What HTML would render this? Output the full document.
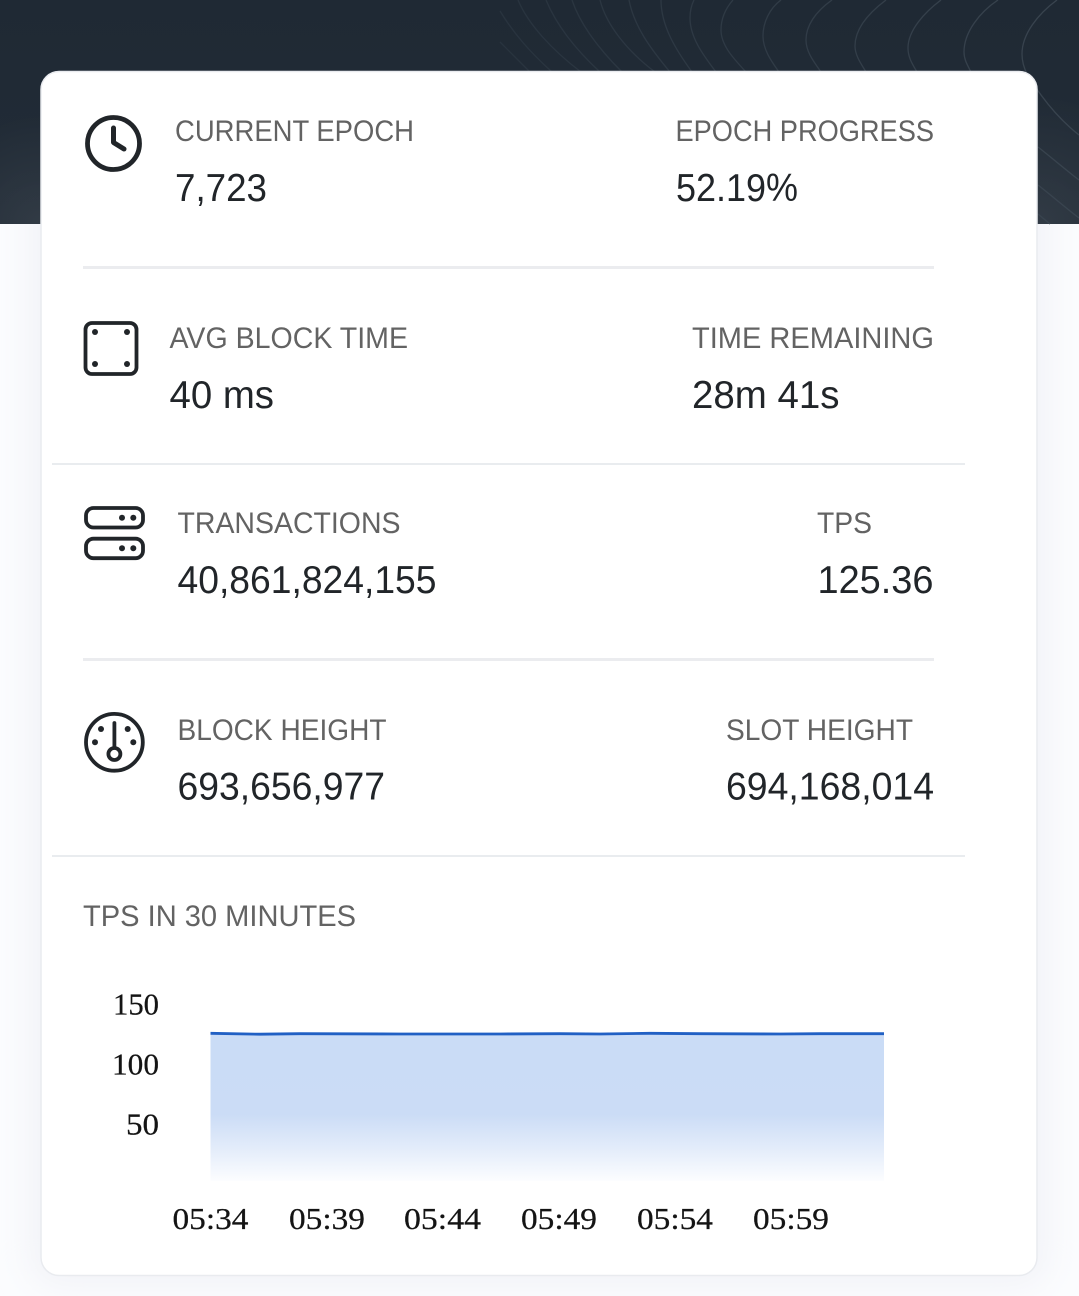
<!DOCTYPE html>
<html><head><meta charset="utf-8"><style>
html,body{margin:0;padding:0;width:1079px;height:1296px;overflow:hidden;background:#fbfcfe}
svg{display:block;position:absolute;left:0;top:0}
.l{font-family:"Liberation Sans",sans-serif;font-size:30px;fill:#636363}
.v{font-family:"Liberation Sans",sans-serif;font-size:38.5px;fill:#212529}
.s{font-family:"Liberation Serif",serif;font-size:31px;fill:#141414;stroke:#141414;stroke-width:.25}
</style></head><body>
<svg width="1079" height="1296" viewBox="0 0 1079 1296" xmlns="http://www.w3.org/2000/svg">
<defs>
<linearGradient id="g" x1="0" y1="1033" x2="0" y2="1181" gradientUnits="userSpaceOnUse">
<stop offset="0" stop-color="#cadcf6"/><stop offset="0.55" stop-color="#cbdcf6"/><stop offset="0.78" stop-color="#e3ecfa"/><stop offset="1" stop-color="#fcfdff"/>
</linearGradient>
<linearGradient id="base" x1="0" y1="0" x2="0" y2="224" gradientUnits="userSpaceOnUse">
<stop offset="0" stop-color="#1f2934"/><stop offset="1" stop-color="#222c37"/>
</linearGradient>
<radialGradient id="gl" cx="41" cy="224" r="110" gradientUnits="userSpaceOnUse"><stop offset="0" stop-color="#fff" stop-opacity=".07"/><stop offset="1" stop-color="#fff" stop-opacity="0"/></radialGradient>
<radialGradient id="gr" cx="1037" cy="224" r="130" gradientUnits="userSpaceOnUse"><stop offset="0" stop-color="#fff" stop-opacity=".07"/><stop offset="1" stop-color="#fff" stop-opacity="0"/></radialGradient>
<linearGradient id="fade" x1="500" y1="0" x2="1079" y2="0" gradientUnits="userSpaceOnUse">
<stop offset="0" stop-color="#28333e"/><stop offset="1" stop-color="#39444f"/>
</linearGradient>
<filter id="b" x="-10%" y="-10%" width="120%" height="120%"><feGaussianBlur stdDeviation="18"/></filter>
<clipPath id="low"><rect x="0" y="224" width="1079" height="1072"/></clipPath>
</defs>
<rect x="0" y="224" width="1079" height="1072" fill="#fbfcfe"/>
<g clip-path="url(#low)"><rect x="33" y="63" width="1012" height="1220" rx="22" fill="#f0f1f6" filter="url(#b)"/></g>
<rect x="0" y="0" width="1079" height="224" fill="url(#base)"/>
<rect x="0" y="90" width="160" height="134" fill="url(#gl)"/>
<rect x="900" y="90" width="179" height="134" fill="url(#gr)"/>
<g fill="none" stroke="url(#fade)" stroke-width="1.3">
<path d="M1057 0C1038 14 1022 34 1022 54C1022 72 1034 85 1041 95C1052 110 1065 124 1079 135"/>
<path d="M998 0C980 12 964 32 964 52C964 60 968 66 971 72"/>
<path d="M941 0C925 12 908 30 908 48C908 58 913 65 917 72"/>
<path d="M886 0C870 12 855 28 855 46C855 56 862 65 866 72"/>
<path d="M832 0C815 12 806 26 806 40C806 52 814 62 821 72"/>
<path d="M781 0C770 8 763 22 763 36C763 50 772 62 779 72"/>
<path d="M733 0C726 8 721 18 721 30C721 46 735 60 746 72"/>
<path d="M694 0C691 6 690 12 690 18C690 38 704 56 716 72"/>
<path d="M661 0C661 26 676 50 692 72"/>
<path d="M629 0C634 26 650 48 670 72"/>
<path d="M600 0C606 24 626 50 655 72"/>
<path d="M572 0C580 24 598 48 622 72"/>
<path d="M546 0C556 24 574 48 600 72"/>
<path d="M518 0C528 24 552 50 581 72"/>
<path d="M500 11C514 34 530 52 552 72"/>
<path d="M500 42C510 52 520 62 530 72"/>
<path d="M1038 147C1052 158 1066 170 1079 180"/>
<path d="M1038 185C1052 196 1066 208 1079 218"/>
<path d="M1038 214L1050 224"/>
</g>
<rect x="41" y="71.500" width="996" height="1204" rx="18" fill="#fff" stroke="#e9ebef" stroke-width="1.5"/>

<rect x="83" y="266" width="851" height="3" fill="#ebecef"/>
<rect x="52" y="463" width="913" height="2" fill="#e9ecef"/>
<rect x="83" y="658" width="851" height="3" fill="#ebecef"/>
<rect x="52" y="855" width="913" height="2" fill="#e9ecef"/>

<!-- clock -->
<g fill="none" stroke="#212529" stroke-linecap="round" stroke-linejoin="round">
<circle cx="113.500" cy="143.500" r="26" stroke-width="4.800"/>
<path d="M113.500 128V142.500L124 149" stroke-width="5"/>
</g>
<!-- square -->
<g>
<rect x="85.500" y="323" width="51" height="51" rx="6.500" fill="none" stroke="#212529" stroke-width="3.800"/>
<circle cx="95" cy="332" r="3" fill="#212529"/><circle cx="127" cy="332" r="3" fill="#212529"/>
<circle cx="95" cy="364" r="3" fill="#212529"/><circle cx="127" cy="364" r="3" fill="#212529"/>
</g>
<!-- server -->
<g>
<rect x="86" y="508" width="57" height="19.500" rx="7.500" fill="none" stroke="#212529" stroke-width="3.800"/>
<rect x="86" y="538.700" width="57" height="19.500" rx="7.500" fill="none" stroke="#212529" stroke-width="3.800"/>
<circle cx="122" cy="517.700" r="3" fill="#212529"/><circle cx="133.300" cy="517.700" r="3" fill="#212529"/>
<circle cx="122" cy="548.300" r="3" fill="#212529"/><circle cx="133.300" cy="548.300" r="3" fill="#212529"/>
</g>
<!-- gauge -->
<g>
<circle cx="114.400" cy="742.300" r="28.400" fill="none" stroke="#212529" stroke-width="3.800"/>
<path d="M114.400 723V747" fill="none" stroke="#212529" stroke-width="3.800" stroke-linecap="round"/>
<circle cx="114.400" cy="754" r="6" fill="none" stroke="#212529" stroke-width="3.800"/>
<circle cx="101" cy="729" r="3" fill="#212529"/><circle cx="127.700" cy="729" r="3" fill="#212529"/>
<circle cx="95" cy="742.300" r="3" fill="#212529"/><circle cx="133.300" cy="742.300" r="3" fill="#212529"/>
</g>

<text class="l" x="175" y="141" textLength="239" lengthAdjust="spacingAndGlyphs">CURRENT EPOCH</text>
<text class="v" x="175" y="201" textLength="92" lengthAdjust="spacingAndGlyphs">7,723</text>
<text class="l" x="675.500" y="141" textLength="258.500" lengthAdjust="spacingAndGlyphs">EPOCH PROGRESS</text>
<text class="v" x="676" y="201" textLength="122" lengthAdjust="spacingAndGlyphs">52.19%</text>

<text class="l" x="169.500" y="348" textLength="238.500" lengthAdjust="spacingAndGlyphs">AVG BLOCK TIME</text>
<text class="v" x="169.500" y="408" textLength="104.500" lengthAdjust="spacingAndGlyphs">40 ms</text>
<text class="l" x="692" y="348" textLength="242" lengthAdjust="spacingAndGlyphs">TIME REMAINING</text>
<text class="v" x="692" y="408" textLength="147.500" lengthAdjust="spacingAndGlyphs">28m 41s</text>

<text class="l" x="177.500" y="533" textLength="223" lengthAdjust="spacingAndGlyphs">TRANSACTIONS</text>
<text class="v" x="177.500" y="593" textLength="259" lengthAdjust="spacingAndGlyphs">40,861,824,155</text>
<text class="l" x="817" y="533" textLength="55" lengthAdjust="spacingAndGlyphs">TPS</text>
<text class="v" x="817.500" y="593" textLength="116" lengthAdjust="spacingAndGlyphs">125.36</text>

<text class="l" x="177.500" y="740" textLength="209" lengthAdjust="spacingAndGlyphs">BLOCK HEIGHT</text>
<text class="v" x="177.500" y="799.500" textLength="207.500" lengthAdjust="spacingAndGlyphs">693,656,977</text>
<text class="l" x="726" y="740" textLength="187" lengthAdjust="spacingAndGlyphs">SLOT HEIGHT</text>
<text class="v" x="726" y="799.500" textLength="208" lengthAdjust="spacingAndGlyphs">694,168,014</text>

<text class="l" x="83" y="926" textLength="273" lengthAdjust="spacingAndGlyphs">TPS IN 30 MINUTES</text>

<rect x="210.500" y="1033" width="673.500" height="148" fill="url(#g)"/>
<path d="M210.500 1033.300L260 1034.200L300 1033.700L400 1034L500 1034L560 1033.700L600 1034L650 1033.300L700 1033.700L780 1034L820 1033.700L884 1033.700" fill="none" stroke="#2160c4" stroke-width="2.800"/>

<text class="s" x="159" y="1014.500" text-anchor="end" textLength="46" lengthAdjust="spacingAndGlyphs">150</text>
<text class="s" x="159" y="1074.500" text-anchor="end" textLength="47" lengthAdjust="spacingAndGlyphs">100</text>
<text class="s" x="159" y="1134.500" text-anchor="end" textLength="33" lengthAdjust="spacingAndGlyphs">50</text>
<text class="s" x="172.500" y="1229" textLength="76" lengthAdjust="spacingAndGlyphs">05:34</text>
<text class="s" x="289" y="1229" textLength="76" lengthAdjust="spacingAndGlyphs">05:39</text>
<text class="s" x="404" y="1229" textLength="77" lengthAdjust="spacingAndGlyphs">05:44</text>
<text class="s" x="521" y="1229" textLength="76" lengthAdjust="spacingAndGlyphs">05:49</text>
<text class="s" x="637" y="1229" textLength="76" lengthAdjust="spacingAndGlyphs">05:54</text>
<text class="s" x="753" y="1229" textLength="76" lengthAdjust="spacingAndGlyphs">05:59</text>
</svg>
</body></html>
